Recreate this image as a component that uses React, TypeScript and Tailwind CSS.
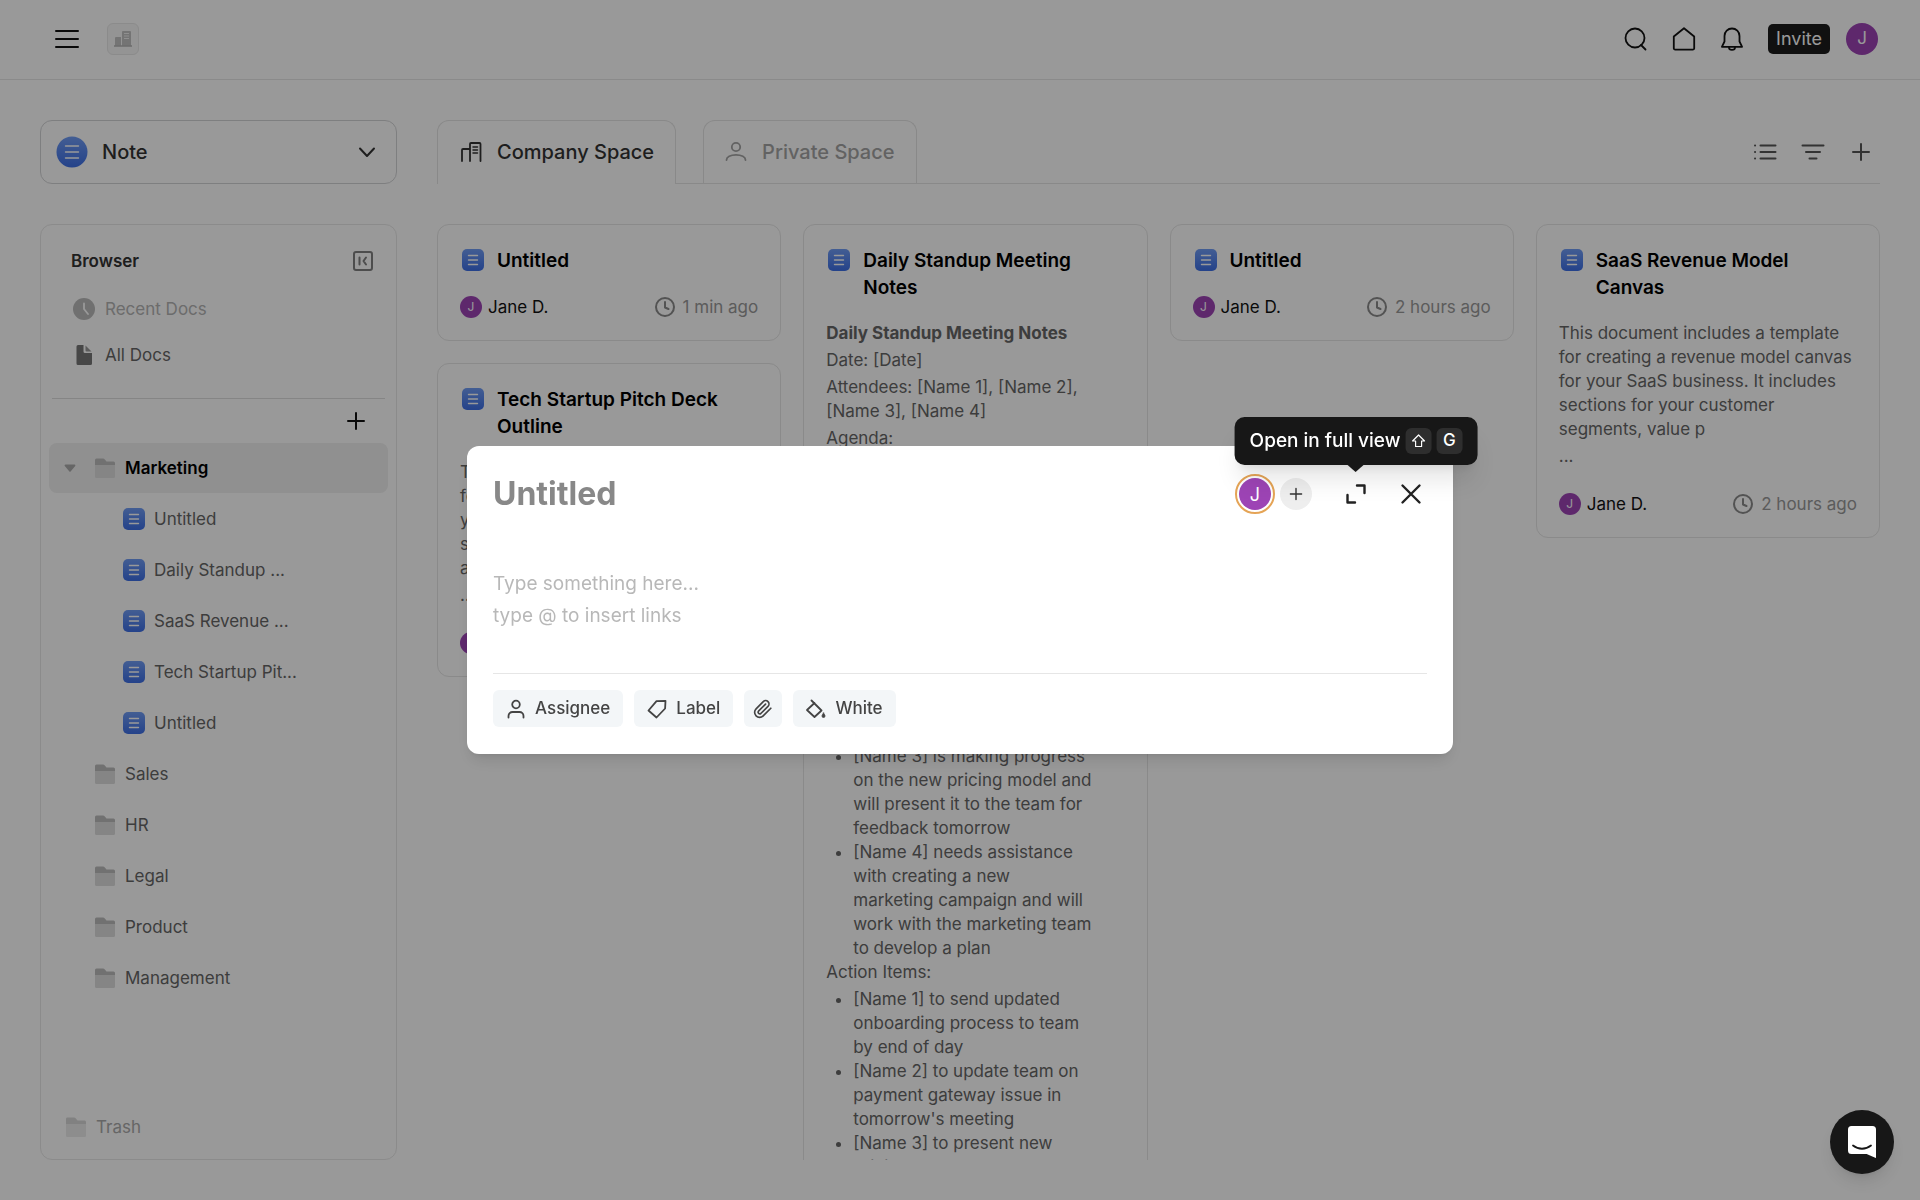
import type { ReactNode } from "react";

type IconProps = { className?: string };

const docs = ["Untitled", "Daily Standup ...", "SaaS Revenue ...", "Tech Startup Pit...", "Untitled"];
const folders = ["Sales", "HR", "Legal", "Product", "Management"];

const stroke = {
  fill: "none",
  stroke: "currentColor",
  strokeLinecap: "round",
  strokeLinejoin: "round",
} as const;

// icons
const PlusIcon = ({ className }: IconProps) => (
  <svg className={className} viewBox="0 0 20 20" strokeWidth="2" {...stroke} aria-hidden="true">
    <path d="M10 2v16M2 10h16" />
  </svg>
);

const NoteIcon = ({ className }: IconProps) => (
  <svg className={className} viewBox="0 0 22 22" aria-hidden="true">
    <defs>
      <linearGradient id="note" x1="0" y1="0" x2="0" y2="1">
        <stop offset="0" stopColor="#709cf5" />
        <stop offset="1" stopColor="#3d6fe6" />
      </linearGradient>
    </defs>
    <rect width="22" height="22" rx="5" fill="url(#note)" />
    <path d="M6.500 6.500h9M6.500 11h9M6.500 15.500h9" stroke="#fff" strokeWidth="1.400" strokeLinecap="round" />
  </svg>
);

const FolderIcon = ({ className }: IconProps) => (
  <svg className={className} viewBox="0 0 20 20" aria-hidden="true">
    <path d="M0 8V2a1.500 1.500 0 0 1 1.500-1.500H8a2 2 0 0 1 1.600.800L11.500 3.500h7A1.500 1.500 0 0 1 20 5v3z" fill="#bdbdbd" />
    <path d="M0 7h20v11.500a1.500 1.500 0 0 1-1.500 1.500h-17A1.500 1.500 0 0 1 0 18.500z" fill="#dedede" />
  </svg>
);

const ClockIcon = ({ className }: IconProps) => (
  <svg className={className} viewBox="0 0 20 20" strokeWidth="2" {...stroke} aria-hidden="true">
    <circle cx="10" cy="10" r="9" />
    <path d="M10 5v5.500l3.500 1.500" />
  </svg>
);

const Avatar = ({ className }: IconProps) => (
  <span className={`flex shrink-0 items-center justify-center rounded-full bg-[#9d44b5] text-white ${className}`}>J</span>
);

const Header = () => (
  <header className="flex h-20 shrink-0 items-center border-b border-[#e6e6e6] pr-[42px] pb-px pl-[55px]">
    <button aria-label="Menu">
      <svg className="h-6 w-6" viewBox="0 0 24 24" strokeWidth="2" {...stroke}>
        <path d="M1 4h22M1 12h22M1 20h22" />
      </svg>
    </button>
    <button aria-label="Workspace" className="ml-7 flex h-8 w-8 items-center justify-center rounded-md border border-[#e8e8e8] bg-[#f7f7f7]">
      <svg className="h-[18px] w-[18px]" viewBox="0 0 18 18" aria-hidden="true">
        <path d="M1 8a1 1 0 0 1 1-1h5v9H1z" fill="#c2c2c2" />
        <path d="M8 2a1 1 0 0 1 1-1h7a1 1 0 0 1 1 1v14H8z" fill="#c2c2c2" />
        <path d="M10 3.500h5M10 6h5M10 8.500h5" stroke="#eee" strokeWidth="1.200" />
        <path d="M0 16h18" stroke="#b5b5b5" strokeWidth="1.600" />
      </svg>
    </button>
    <div className="ml-auto flex items-center gap-6">
      <button aria-label="Search">
        <svg className="h-6 w-6" viewBox="0 0 24 24" strokeWidth="1.800" {...stroke}>
          <circle cx="11" cy="11" r="9.500" />
          <path d="M17 18l4.500 4.500" />
        </svg>
      </button>
      <button aria-label="Home">
        <svg className="h-6 w-6" viewBox="0 0 24 24" strokeWidth="1.800" {...stroke}>
          <path d="M1.800 9.500L12 1.200l10.200 8.300v11.700a1.400 1.400 0 0 1-1.400 1.400H3.200a1.400 1.400 0 0 1-1.400-1.400z" />
        </svg>
      </button>
      <button aria-label="Notifications">
        <svg className="h-6 w-6" viewBox="0 0 24 24" strokeWidth="1.800" {...stroke}>
          <path d="M4.500 14.500V9a7.500 7.500 0 0 1 15 0v5.500l2.600 5.300H1.900z" />
          <path d="M9 20.500a3 2.400 0 0 0 6 0" />
        </svg>
      </button>
      <div className="flex items-center gap-4">
        <button className="h-[30px] rounded-[5px] bg-[#1c1c1c] px-2 text-[18px] leading-[30px] text-white">Invite</button>
        <Avatar className="h-8 w-8 text-[17px]" />
      </div>
    </div>
  </header>
);

const Sidebar = () => (
  <aside className="flex w-[357px] shrink-0 flex-col gap-10">
    <button className="flex h-16 shrink-0 items-center rounded-xl border border-[#d3d4d6] px-[15px] text-[20px] font-medium text-[#333]">
      <svg className="mr-3.5 h-8 w-8" viewBox="0 0 32 32" aria-hidden="true">
        <circle cx="16" cy="16" r="15.500" fill="url(#note)" />
        <path d="M9.500 10h13M9.500 16h13M9.500 22h13" stroke="#fff" strokeWidth="1.400" strokeLinecap="round" />
      </svg>
      Note
      <svg className="mr-1 ml-auto h-5 w-5" viewBox="0 0 20 20" strokeWidth="2" {...stroke} aria-hidden="true">
        <path d="M3 6.500l7 7.500 7-7.500" />
      </svg>
    </button>

    <nav className="flex min-h-0 flex-1 flex-col rounded-xl border border-[#e8e8e8] px-2 text-[17px] leading-6 text-[#666]">
      <div className="mt-6 flex items-center justify-between pr-[15px] pl-[22px]">
        <h2 className="font-semibold text-[#333]">Browser</h2>
        <button aria-label="Collapse browser" className="text-[#808080]">
          <svg className="h-5 w-5" viewBox="0 0 20 20" strokeWidth="2" {...stroke}>
            <rect x="1" y="1" width="18" height="18" rx="2" />
            <path d="M6.500 6.500v7M13 6.500L10.500 10l2.500 3.500" />
          </svg>
        </button>
      </div>
      <a href="#" className="mt-6 flex items-center gap-2.5 pl-6 text-[#b4b4b4]">
        <svg className="h-[22px] w-[22px]" viewBox="0 0 22 22" aria-hidden="true">
          <circle cx="11" cy="11" r="11" fill="#bbb" />
          <path d="M11 5.500V11l4 5" stroke="#fff" strokeWidth="1.800" fill="none" strokeLinecap="round" />
        </svg>
        Recent Docs
      </a>
      <a href="#" className="mt-[22px] flex items-center gap-2.5 pl-6">
        <svg className="h-[22px] w-[22px]" viewBox="0 0 22 22" aria-hidden="true">
          <path d="M5 1h5.500v6.500A1.500 1.500 0 0 0 12 9h7v10.500a1.500 1.500 0 0 1-1.500 1.500H5a1.500 1.500 0 0 1-1.500-1.500v-17A1.500 1.500 0 0 1 5 1z" fill="#777" />
          <path d="M12.500 1.500L18.500 7.500h-5a1 1 0 0 1-1-1z" fill="#999" />
        </svg>
        All Docs
      </a>
      <hr className="mx-[3px] mt-[31px] border-[#dedede]" />
      <button aria-label="New folder" className="mt-3 mr-[22px] self-end text-[#111]">
        <PlusIcon className="h-5 w-5" />
      </button>
      <ul className="mt-3">
        <li>
          <a href="#" className="flex h-[50px] items-center rounded-lg bg-[#f0f0f0] pl-[15px] font-semibold text-black">
            <svg className="h-3 w-3" viewBox="0 0 12 12" aria-hidden="true">
              <path d="M1.500 2.500h9a1 1 0 0 1 .7 1.600L6.800 9.300a1 1 0 0 1-1.600 0L.8 4.100a1 1 0 0 1 .7-1.600z" fill="#aaa" />
            </svg>
            <FolderIcon className="mr-2.5 ml-[19px] h-5 w-5" />
            Marketing
          </a>
          <ul>
            {docs.map((doc, i) => (
              <li key={i}>
                <a href="#" className="flex h-[51px] items-center gap-[9px] pl-[74px]">
                  <NoteIcon className="h-[22px] w-[22px]" />
                  {doc}
                </a>
              </li>
            ))}
          </ul>
        </li>
        {folders.map((folder) => (
          <li key={folder}>
            <a href="#" className="flex h-[51px] items-center gap-2.5 pl-[46px]">
              <FolderIcon className="h-5 w-5" />
              {folder}
            </a>
          </li>
        ))}
      </ul>
      <a href="#" className="mt-auto mb-5 flex items-center gap-2.5 pl-[17px] text-[#aaa]">
        <FolderIcon className="h-5 w-5 opacity-60" />
        Trash
      </a>
    </nav>
  </aside>
);

const Tabs = () => (
  <div className="flex h-16 shrink-0 text-[20px] font-medium">
    <button className="flex items-center gap-[15px] rounded-t-xl border-x border-t border-[#e4e4e4] pr-[21px] pb-px pl-[22px] whitespace-nowrap text-[#333]">
      <svg className="h-[22px] w-[22px]" viewBox="0 0 22 22" strokeWidth="1.800" {...stroke} aria-hidden="true">
        <path d="M2 20V9a1 1 0 0 1 1-1h6M10 20V3a1 1 0 0 1 1-1h8.500a1 1 0 0 1 1 1v17" />
        <path d="M13 6h4.500M13 9h4.500M13 12h4.500" strokeWidth="1.500" />
      </svg>
      Company Space
    </button>
    <div className="flex flex-1 border-b border-[#e4e4e4] pl-[27px]">
      <button className="flex items-center gap-[15px] rounded-t-xl border-x border-t border-[#e4e4e4] px-[21px] whitespace-nowrap text-[#a4a4a4]">
        <svg className="h-[22px] w-[22px]" viewBox="0 0 22 22" strokeWidth="1.800" {...stroke} aria-hidden="true">
          <circle cx="11" cy="6" r="4.200" />
          <path d="M1.500 19c0-3 4-5.200 9.500-5.200s9.500 2.200 9.500 5.200" />
        </svg>
        Private Space
      </button>
      <div className="ml-auto flex items-center gap-6 pr-[7px] text-[#555]">
        <button aria-label="List view">
          <svg className="h-6 w-6" viewBox="0 0 24 24" strokeWidth="2" {...stroke}>
            <path d="M7.500 5.500h15M7.500 12h15M7.500 18.500h15M2 5.500h.1M2 12h.1M2 18.500h.1" />
          </svg>
        </button>
        <button aria-label="Filter">
          <svg className="h-6 w-6" viewBox="0 0 24 24" strokeWidth="2" {...stroke}>
            <path d="M1.500 5.500h21M5 12h14M8.500 18.500h7" />
          </svg>
        </button>
        <button aria-label="New note" className="flex h-6 w-6 items-center justify-center">
          <PlusIcon className="h-5 w-5" />
        </button>
      </div>
    </div>
  </div>
);

const Card = ({ title, time, children }: { title: string; time: string; children?: ReactNode }) => (
  <article className="rounded-xl border border-[#e6e6e6] p-[22px] text-[17px] leading-6">
    <div className="flex gap-[13px] pl-0.5">
      <NoteIcon className="mt-0.5 h-[22px] w-[22px] shrink-0" />
      <h3 className="text-[19px] leading-[27px] font-semibold text-black">{title}</h3>
    </div>
    {children && <div className="mt-5 flow-root text-[#666]">{children}</div>}
    <div className="mt-[22px] flex h-[22px] items-center">
      <Avatar className="mr-1.5 h-[22px] w-[22px] text-[12px]" />
      <span className="text-[#111]">Jane D.</span>
      <ClockIcon className="mr-2 ml-auto h-5 w-5 text-[#8a8a8a]" />
      <time className="text-[#999]">{time}</time>
    </div>
  </article>
);

const paragraphClass = "mb-[3px]";
const listClass = "list-disc pr-8 pl-[27px]";

const Cards = () => (
  <div className="grid min-h-0 flex-1 grid-cols-4 items-start gap-[22px] overflow-hidden">
    <div className="flex flex-col gap-[22px]">
      <Card title="Untitled" time="1 min ago" />
      <Card title="Tech Startup Pitch Deck Outline" time="2 hours ago">
        <p className={paragraphClass}>
          This document includes a template for creating a pitch deck outline for your tech startup. It includes sections for your company, market and c
        </p>
        <p className={paragraphClass}>...</p>
      </Card>
    </div>
    <Card title="Daily Standup Meeting Notes" time="2 hours ago">
      <p className={`${paragraphClass} font-bold`}>Daily Standup Meeting Notes</p>
      <p className={paragraphClass}>Date: [Date]</p>
      <p className={paragraphClass}>Attendees: [Name 1], [Name 2], [Name 3], [Name 4]</p>
      <p className={paragraphClass}>Agenda:</p>
      <ul className={listClass}>
        <li>Project updates</li>
        <li>Roadblocks</li>
        <li>Action items</li>
      </ul>
      <p className={paragraphClass}>Updates:</p>
      <ul className={listClass}>
        <li>[Name 1] has completed the user onboarding flow and will share it with the team by end of day</li>
        <li>[Name 2] is working on the payment gateway and has found an issue with the latest test results</li>
        <li>[Name 3] is making progress on the new pricing model and will present it to the team for feedback tomorrow</li>
        <li>[Name 4] needs assistance with creating a new marketing campaign and will work with the marketing team to develop a plan</li>
      </ul>
      <p className={paragraphClass}>Action Items:</p>
      <ul className={listClass}>
        <li>[Name 1] to send updated onboarding process to team by end of day</li>
        <li>[Name 2] to update team on payment gateway issue in tomorrow's meeting</li>
        <li>[Name 3] to present new pricing model to team</li>
      </ul>
    </Card>
    <Card title="Untitled" time="2 hours ago" />
    <Card title="SaaS Revenue Model Canvas" time="2 hours ago">
      <p className={paragraphClass}>
        This document includes a template for creating a revenue model canvas for your SaaS business. It includes sections for your customer segments, value p
      </p>
      <p className={paragraphClass}>...</p>
    </Card>
  </div>
);

const toolClass = "flex h-[37px] items-center gap-[9px] rounded-md bg-[#f3f6f8] px-[13px] text-[17px] font-medium text-[#444]";

const NoteDialog = () => (
  <div className="fixed inset-0 flex items-center justify-center bg-black/40">
    <div role="dialog" aria-label="New note" className="w-[986px] rounded-xl bg-white px-[26px] pt-7 pb-[27px] shadow-lg">
      <div className="flex h-10 items-center pr-[5px]">
        <input
          aria-label="Title"
          placeholder="Untitled"
          className="h-10 min-w-0 flex-1 text-[32px] leading-10 font-bold placeholder:text-[#888] focus:outline-none"
        />
        <span className="rounded-full border-2 border-[#e5a456] p-0.5">
          <Avatar className="h-8 w-8 text-[18px]" />
        </span>
        <button aria-label="Add member" className="ml-[5px] flex h-8 w-8 items-center justify-center rounded-full bg-[#eee] text-[#333]">
          <PlusIcon className="h-3.5 w-3.5" />
        </button>
        <button aria-label="Open in full view" className="relative ml-[34px] flex h-5 w-5 items-center justify-center text-[#222]">
          <svg className="h-5 w-5" viewBox="0 0 20 20" strokeWidth="2.400" {...stroke}>
            <path d="M11 1.500h7.500V9M1.500 11v7.500H9" />
          </svg>
          <span
            role="tooltip"
            className="absolute bottom-full left-1/2 mb-[19px] flex h-12 -translate-x-1/2 items-center gap-[5px] rounded-[10px] bg-[#171717] px-[15px] text-[19px] font-medium whitespace-nowrap text-white shadow-xl"
          >
            Open in full view
            <kbd className="flex h-[26px] w-[26px] items-center justify-center rounded-md bg-[#2e2e2e]">
              <svg className="h-3.5 w-3.5" viewBox="0 0 14 14" strokeWidth="1.200" {...stroke}>
                <path d="M7 1l6 6h-3v5.500H4V7H1z" />
              </svg>
            </kbd>
            <kbd className="flex h-[26px] w-[26px] items-center justify-center rounded-md bg-[#2e2e2e] font-[Inter] text-[17px]">G</kbd>
            <span className="absolute top-full left-1/2 -translate-x-1/2 border-x-8 border-t-[7px] border-x-transparent border-t-[#171717]" />
          </span>
        </button>
        <button aria-label="Close" className="ml-[34px] text-[#222]">
          <svg className="h-[22px] w-[22px]" viewBox="0 0 22 22" strokeWidth="2.400" {...stroke}>
            <path d="M2.500 2.500l17 17M19.500 2.500l-17 17" />
          </svg>
        </button>
      </div>
      <textarea
        aria-label="Note"
        placeholder={"Type something here...\ntype @ to insert links"}
        className="mt-[54px] block h-[105px] w-full resize-none text-[19px] leading-8 placeholder:text-[#b8b8b8] focus:outline-none"
      />
      <div className="flex gap-[11px] border-t border-[#e6e6e6] pt-4">
        <button className={toolClass}>
          <svg className="h-5 w-5" viewBox="0 0 20 20" strokeWidth="1.800" {...stroke} aria-hidden="true">
            <circle cx="10" cy="5.500" r="3.800" />
            <path d="M2.500 18.500v-1.500a4 4 0 0 1 4-4h7a4 4 0 0 1 4 4v1.500" />
          </svg>
          Assignee
        </button>
        <button className={toolClass}>
          <svg className="h-5 w-5" viewBox="0 0 20 20" strokeWidth="1.800" {...stroke} aria-hidden="true">
            <path d="M1.500 11.500L9.500 2.200l9-.4-.4 7.700-8.600 9z" />
          </svg>
          Label
        </button>
        <button aria-label="Attach file" className={toolClass}>
          <svg className="-mx-1 h-5 w-5" viewBox="0 0 24 24" strokeWidth="2" {...stroke}>
            <path d="M21.400 11.100l-9.200 9.200a6 6 0 0 1-8.500-8.500l8.600-8.600a4 4 0 0 1 5.700 5.700l-8.600 8.500a2 2 0 0 1-2.800-2.800l8.500-8.500" />
          </svg>
        </button>
        <button className={toolClass}>
          <svg className="h-5 w-5" viewBox="0 0 20 20" strokeWidth="1.800" {...stroke} aria-hidden="true">
            <path d="M5.500 1.500L15.500 11.500 8.500 18 1 11l7.500-7" />
            <path d="M17.500 14c1 1.400 1.500 2.200 1.500 3a1.500 1.500 0 0 1-3 0c0-.8.500-1.600 1.500-3z" fill="currentColor" strokeWidth="0.800" />
          </svg>
          White
        </button>
      </div>
    </div>
  </div>
);

const ChatButton = () => (
  <button aria-label="Open chat" className="fixed right-[26px] bottom-[26px] flex h-16 w-16 items-center justify-center rounded-full bg-[#171717] shadow-lg">
    <svg className="h-8 w-7" viewBox="0 0 28 32" aria-hidden="true">
      <path d="M3.500 0h21A3.500 3.500 0 0 1 28 3.500V32s-3.200-1.100-9.300-4H3.500A3.500 3.500 0 0 1 0 24.500v-21A3.500 3.500 0 0 1 3.500 0z" fill="#fff" />
      <path d="M5 19.500c5.500 4.300 12.500 4.300 18 0" fill="none" stroke="#171717" strokeWidth="1.800" strokeLinecap="round" />
    </svg>
  </button>
);

const App = () => {
  return (
    <div className="flex h-screen flex-col overflow-hidden bg-white font-[Inter,sans-serif] text-[#111]">
      <Header />
      <main className="flex min-h-0 flex-1 gap-10 p-10">
        <Sidebar />
        <section className="flex min-w-0 flex-1 flex-col gap-10">
          <Tabs />
          <Cards />
        </section>
      </main>
      <NoteDialog />
      <ChatButton />
    </div>
  );
};

export default App;
